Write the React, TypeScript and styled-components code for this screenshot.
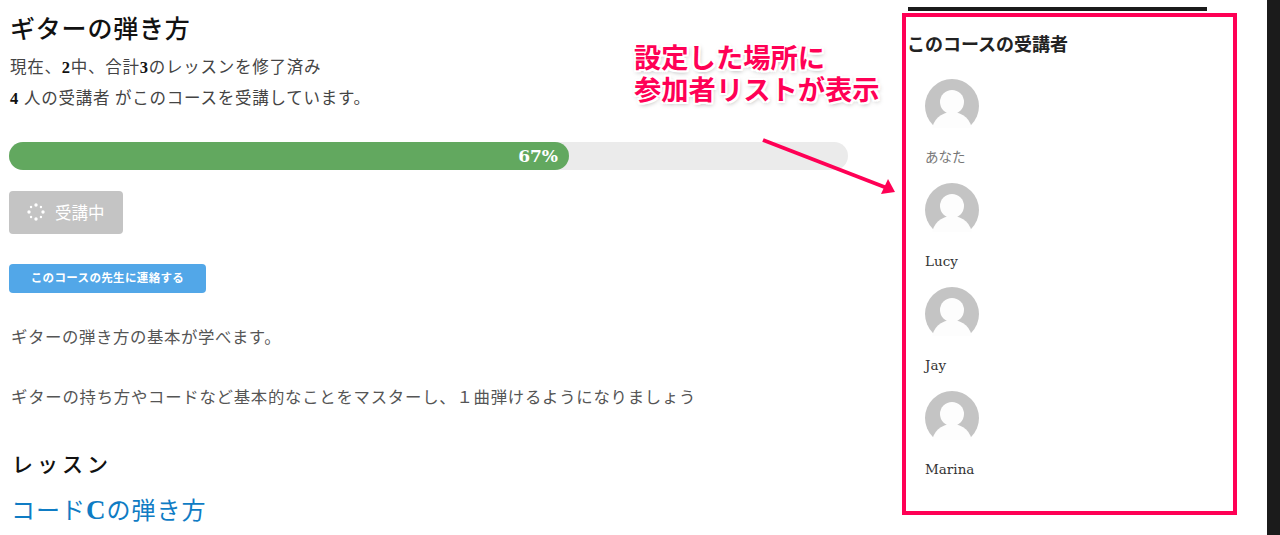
import React from "react";
import styled, { createGlobalStyle } from "styled-components";

const serif = `"Liberation Serif", "Noto Sans CJK JP", serif`;
const pink = "#ff0055";

const GlobalStyle = createGlobalStyle`
  html, body {
    margin: 0;
    padding: 0;
    background: #fff;
    overflow: hidden;
  }
`;

const Page = styled.div`
  position: relative;
  display: flex;
  width: 1280px;
  height: 535px;
  overflow: hidden;
  font-family: ${serif};
  color: #444;
`;

const Main = styled.main`
  width: 848px;
  padding: 15px 0 0 9px;
  box-sizing: content-box;
`;

const CourseTitle = styled.h1`
  margin: 0 0 0 1px;
  font-size: 25px;
  line-height: 30px;
  font-weight: 500;
  letter-spacing: 0.8px;
  color: #111;
`;

const Summary = styled.p`
  margin: 7px 0 0 1px;
  width: 420px;
  font-size: 16.5px;
  line-height: 31px;
  letter-spacing: 0.75px;
  color: #444;
  b {
    color: #111;
    font-weight: 700;
  }
`;

const ProgressTrack = styled.div`
  margin-top: 28px;
  height: 28px;
  width: 839px;
  border-radius: 14px;
  background: #ebebeb;
`;

const ProgressFill = styled.div`
  height: 100%;
  border-radius: 14px;
  background: #62a85f;
  color: #fff;
  font: 700 17px/28px "DejaVu Serif", serif;
  text-align: right;
  padding-right: 11px;
  box-sizing: border-box;
`;

const StatusButton = styled.div`
  margin-top: 21px;
  width: 114px;
  height: 43px;
  display: flex;
  align-items: center;
  gap: 10px;
  padding: 0 0 2px 18px;
  box-sizing: border-box;
  border-radius: 4px;
  background: #c4c4c4;
  color: #fff;
  font-size: 16.5px;
`;

const ContactButton = styled.button`
  display: block;
  margin-top: 30px;
  width: 197px;
  height: 29px;
  padding: 0 0 3px;
  border: 0;
  border-radius: 4px;
  background: #52a7e8;
  color: #fff;
  font-family: ${serif};
  font-size: 11.5px;
  font-weight: 700;
  letter-spacing: 0.35px;
`;

const BodyText = styled.p<{ $top: number; $spacing: number }>`
  margin: ${({ $top }) => $top}px 0 0 2px;
  font-size: 16.4px;
  line-height: 28px;
  letter-spacing: ${({ $spacing }) => $spacing}px;
  color: #555;
`;

const SectionTitle = styled.h2`
  margin: 39px 0 0 3px;
  font-size: 21px;
  line-height: 28px;
  font-weight: 500;
  letter-spacing: 4px;
  color: #111;
`;

const LessonLink = styled.a`
  display: block;
  margin: 15px 0 0 2px;
  font-size: 24px;
  line-height: 32px;
  letter-spacing: 1px;
  color: #0f7cc4;
  b {
    font-weight: 700;
    font-size: 27px;
  }
`;

const Sidebar = styled.aside`
  width: 359px;
  margin-left: 51px;
  padding-top: 7px;
`;

const TopRule = styled.div`
  width: 299px;
  height: 4px;
  background: #1b1b1b;
`;

const SidebarTitle = styled.h3`
  margin: 21px 0 0 -1px;
  font-family: "Noto Sans CJK JP", sans-serif;
  font-size: 18px;
  line-height: 22px;
  font-weight: 700;
  color: #222;
`;

const AttendeeList = styled.ul`
  list-style: none;
  margin: 25px 0 0 17px;
  padding: 0;
  display: flex;
  flex-direction: column;
  gap: 16px;
`;

const Attendee = styled.li`
  display: flex;
  flex-direction: column;
  gap: 14px;
  height: 88px;
`;

const AttendeeName = styled.span<{ $muted?: boolean }>`
  font-family: "DejaVu Serif", "Noto Sans CJK JP", serif;
  font-size: 13.5px;
  line-height: 20px;
  color: ${({ $muted }) => ($muted ? "#777" : "#333")};
`;

const DarkEdge = styled.div`
  position: absolute;
  top: 0;
  right: 0;
  width: 13px;
  height: 100%;
  background: #1b1b1b;
`;

const Frame = styled.div`
  position: absolute;
  left: 902px;
  top: 13px;
  width: 335px;
  height: 502px;
  box-sizing: border-box;
  border: 4px solid ${pink};
  pointer-events: none;
`;

const Callout = styled.div`
  position: absolute;
  left: 634px;
  top: 40px;
  font-family: "Noto Sans CJK JP", sans-serif;
  font-size: 27.3px;
  line-height: 32px;
  font-weight: 700;
  white-space: nowrap;
  color: ${pink};
  text-shadow: 2px 0 0 #fff, -2px 0 0 #fff, 0 2px 0 #fff, 0 -2px 0 #fff,
    2px 2px 0 #fff, -2px 2px 0 #fff, 2px -2px 0 #fff, -2px -2px 0 #fff,
    1px 2px 5px rgba(0, 0, 0, 0.4);
`;

const ArrowSvg = styled.svg`
  position: absolute;
  left: 755px;
  top: 132px;
`;

const Spinner = () => (
  <svg width="18" height="18" viewBox="0 0 18 18" fill="#fff">
    {Array.from({ length: 8 }).map((_, i) => {
      const a = (i / 8) * Math.PI * 2;
      return <circle key={i} cx={9 + 7 * Math.cos(a)} cy={9 + 7 * Math.sin(a)} r={i % 2 ? 1.2 : 1.7} />;
    })}
  </svg>
);

const Avatar = () => (
  <svg width="54" height="54" viewBox="0 0 54 54">
    <circle cx="27" cy="27" r="27" fill="#c4c4c4" />
    <circle cx="27" cy="23" r="12" fill="#fdfdfd" />
    <ellipse cx="27" cy="52" rx="20" ry="19" fill="#fdfdfd" />
    <rect x="0" y="49" width="54" height="5" fill="#fff" />
  </svg>
);

const attendees = [
  { name: "あなた", muted: true },
  { name: "Lucy" },
  { name: "Jay" },
  { name: "Marina" },
];

export default function App() {
  return (
    <>
      <GlobalStyle />
      <Page>
        <Main>
          <CourseTitle>ギターの弾き方</CourseTitle>
          <Summary>
            現在、<b>2</b>中、合計<b>3</b>のレッスンを修了済み
            <br />
            <b>4</b> 人の受講者 がこのコースを受講しています。
          </Summary>
          <ProgressTrack>
            <ProgressFill style={{ width: "560px" }}>67%</ProgressFill>
          </ProgressTrack>
          <StatusButton>
            <Spinner />
            受講中
          </StatusButton>
          <ContactButton>このコースの先生に連絡する</ContactButton>
          <BodyText $top={31} $spacing={0.6}>ギターの弾き方の基本が学べます。</BodyText>
          <BodyText $top={32} $spacing={0.74}>ギターの持ち方やコードなど基本的なことをマスターし、１曲弾けるようになりましょう</BodyText>
          <SectionTitle>レッスン</SectionTitle>
          <LessonLink>
            コード<b>C</b>の弾き方
          </LessonLink>
        </Main>
        <Sidebar>
          <TopRule />
          <SidebarTitle>このコースの受講者</SidebarTitle>
          <AttendeeList>
            {attendees.map((a) => (
              <Attendee key={a.name}>
                <Avatar />
                <AttendeeName $muted={a.muted}>{a.name}</AttendeeName>
              </Attendee>
            ))}
          </AttendeeList>
        </Sidebar>
        <DarkEdge />
        <Frame />
        <Callout>
          設定した場所に
          <br />
          参加者リストが表示
        </Callout>
        <ArrowSvg width="145" height="65" viewBox="0 0 145 65">
          <path d="M8 8 L132 56" stroke={pink} strokeWidth="4" fill="none" />
          <path d="M140 60 L126 62 L133 47 Z" fill={pink} />
        </ArrowSvg>
      </Page>
    </>
  );
}
